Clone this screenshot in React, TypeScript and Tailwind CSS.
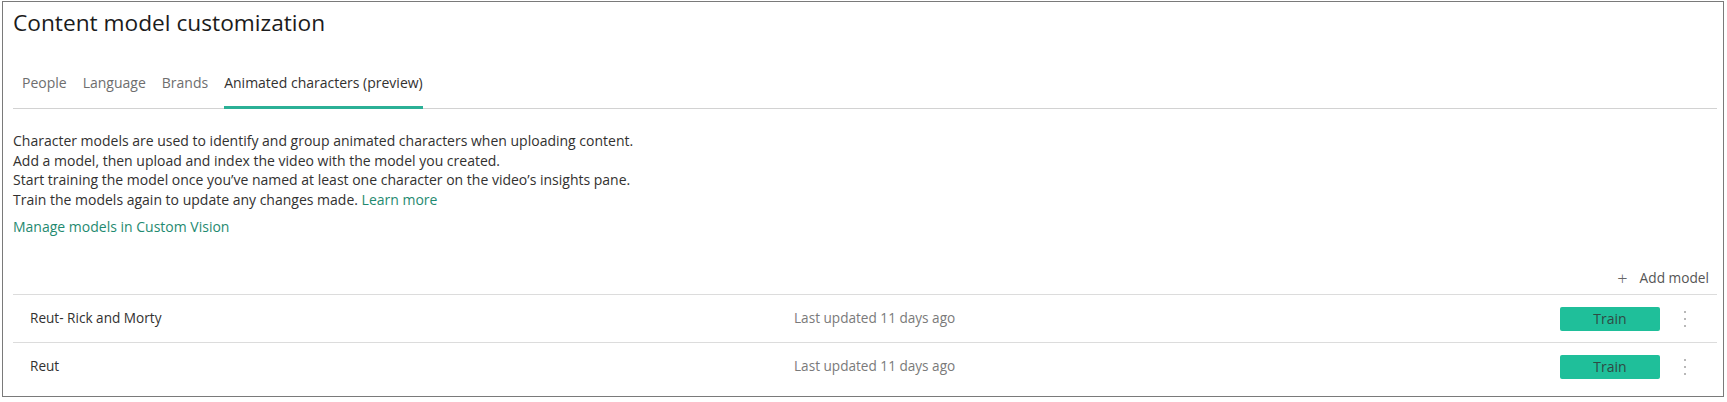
import React from "react";

const tabs = ["People", "Language", "Brands", "Animated characters (preview)"];

const models = [
  { name: "Reut- Rick and Morty", updated: "Last updated 11 days ago" },
  { name: "Reut", updated: "Last updated 11 days ago" },
];

const Kebab = () => (
  <svg width="4" height="18" viewBox="0 0 4 18" fill="#b8b8b8">
    <rect x="1" y="1" width="2" height="2" />
    <rect x="1" y="8" width="2" height="2" />
    <rect x="1" y="15" width="2" height="2" />
  </svg>
);

export default function App() {
  return (
    <div
      className="bg-white pt-[1px] pl-[2px]"
      style={{ fontFamily: '"Open Sans", "Noto Sans", sans-serif' }}
    >
      <div className="w-[1722px] h-[396px] border border-[#7a7a7a] pl-[10px] pr-[6px] text-[#323130]">
        <h1 className="pt-[6px] text-[22.7px] leading-[30px] text-[#1b1b1b]">
          Content model customization
        </h1>

        <div className="mt-[35px] flex gap-[16px] border-b border-[#d2d2d2] pl-[9px]">
          {tabs.map((t, i) => (
            <div
              key={t}
              className={
                i === 3
                  ? "pb-[12px] text-[14px] leading-[20px] text-[#323130] border-b-[3px] border-[#2bb096] -mb-[1px]"
                  : "pb-[15px] text-[14px] leading-[20px] text-[#6e6e6e]"
              }
            >
              {t}
            </div>
          ))}
        </div>

        <div className="mt-[22px] text-[14px] leading-[19.5px]">
          <p>Character models are used to identify and group animated characters when uploading content.</p>
          <p>Add a model, then upload and index the video with the model you created.</p>
          <p>Start training the model once you’ve named at least one character on the video’s insights pane.</p>
          <p>
            Train the models again to update any changes made.{" "}
            <a className="text-[#1f8a70]">Learn more</a>
          </p>
        </div>

        <div className="mt-[8px] text-[14px] leading-[20px] text-[#1f8a70]">
          Manage models in Custom Vision
        </div>

        <div className="mt-[31px] flex justify-end items-center gap-[12px] pr-[8px] text-[13.7px] leading-[20px] text-[#555]">
          <span className="text-[18px] leading-[20px] font-light text-[#666]">+</span>
          <span>Add model</span>
        </div>

        <div className="mt-[6px]">
          {models.map((m) => (
            <div
              key={m.name}
              className="flex items-center h-[48px] border-t border-[#dcdcdc] pl-[17px] pr-[7px] text-[13.6px]"
            >
              <div className="w-[764px] text-[#323130]">{m.name}</div>
              <div className="text-[#7a7a7a]">{m.updated}</div>
              <button className="ml-auto w-[100px] h-[24px] rounded-[2px] bg-[#1fbf9a] text-[14px] text-[#2f4a44]">
                Train
              </button>
              <div className="w-[50px] flex justify-center">
                <Kebab />
              </div>
            </div>
          ))}
        </div>
      </div>
    </div>
  );
}
